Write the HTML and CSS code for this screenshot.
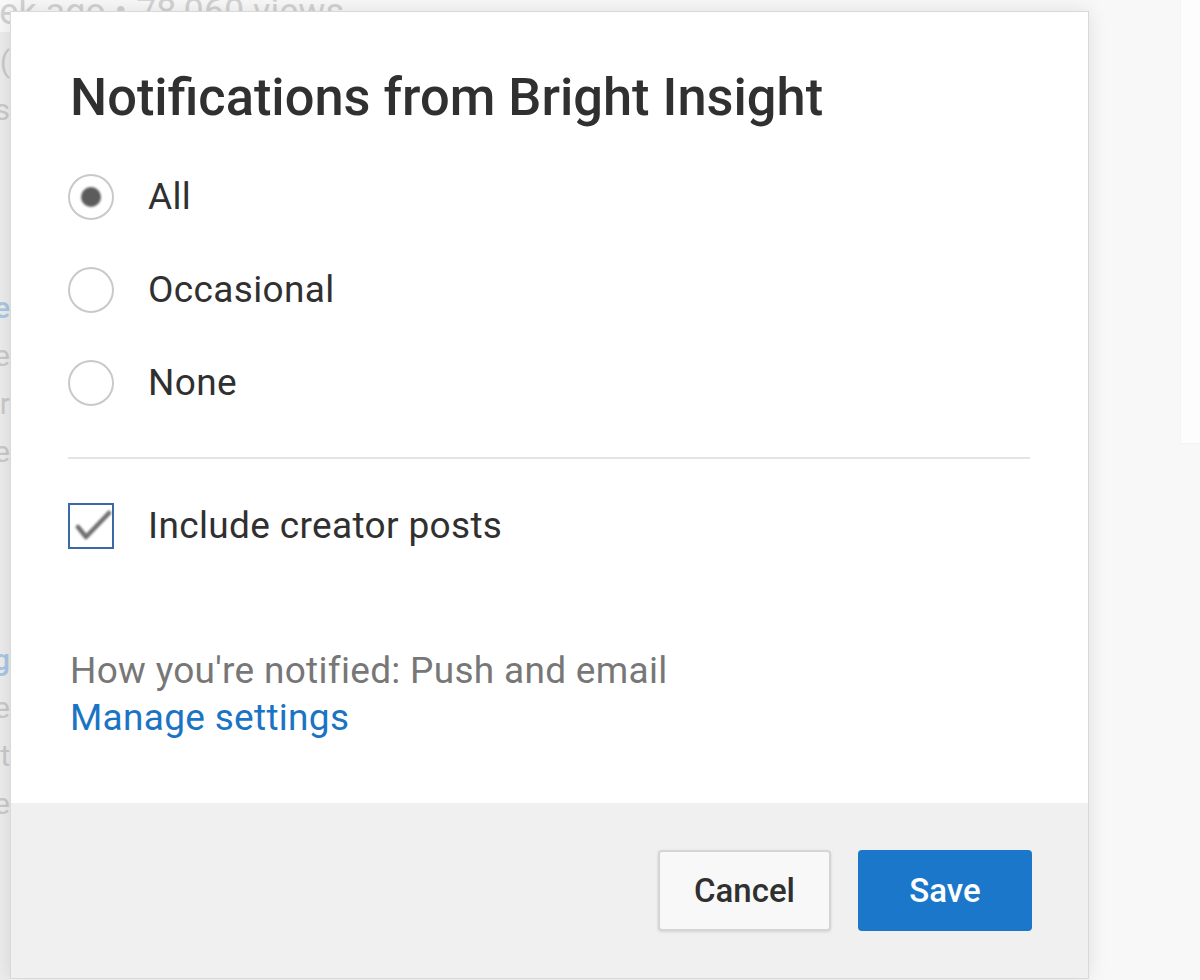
FILE: index.html
```html
<!DOCTYPE html>
<html lang="en">
<head>
<meta charset="utf-8">
<title>Notifications from Bright Insight</title>
<link rel="stylesheet" href="styles.css">
</head>
<body>
<div class="page">
  <div class="meta">1 week ago • 78,060 views</div>
  <div class="side">
    <div class="frag top">Play (</div>
    <div class="frag">views</div>
    <div class="group">
      <div class="frag link">The sure</div>
      <div class="frag">one</div>
      <div class="frag">year</div>
      <div class="frag">time</div>
    </div>
    <div class="group second">
      <div class="frag link">Amazing</div>
      <div class="frag">one</div>
      <div class="frag">last</div>
      <div class="frag">time</div>
    </div>
  </div>
  <div class="main"></div>
  <div class="panel"></div>
</div>

<div class="dialog" role="dialog" aria-labelledby="dlg-title">
  <div class="content">
    <h1 class="title" id="dlg-title">Notifications from Bright Insight</h1>
    <div class="options">
      <div class="option"><span class="radio on"></span><span class="label">All</span></div>
      <div class="option"><span class="radio"></span><span class="label">Occasional</span></div>
      <div class="option"><span class="radio"></span><span class="label">None</span></div>
    </div>
    <div class="divider"></div>
    <div class="option check-row">
      <span class="checkbox">
        <svg viewBox="0 0 46 46" width="46" height="46" aria-hidden="true"><path d="M10 24 L18 34 L41 10" fill="none" stroke="#707070" stroke-width="4.5" stroke-linecap="round" stroke-linejoin="round"/></svg>
      </span>
      <span class="label">Include creator posts</span>
    </div>
    <div class="notify">
      <div class="how">How you're notified: Push and email</div>
      <a class="manage" href="#">Manage settings</a>
    </div>
  </div>
  <div class="footer">
    <button class="btn cancel" type="button">Cancel</button>
    <button class="btn save" type="button">Save</button>
  </div>
</div>
</body>
</html>
```

FILE: styles.css
```css
html, body {
  margin: 0;
  padding: 0;
}

body {
  background: #f8f8f8;
  font-family: Roboto, "Liberation Sans", Arial, sans-serif;
  width: 1200px;
  height: 980px;
  overflow: hidden;
  position: relative;
}

/* background page (faded) */
.page {
  display: grid;
  grid-template-columns: 10px 1fr 20px;
  grid-template-rows: auto 1fr;
  height: 980px;
}

.meta {
  grid-column: 1 / 3;
  grid-row: 1;
  margin: -8px 0 0 -76px;
  font-size: 36px;
  line-height: 40px;
  color: #d2d2d2;
  white-space: nowrap;
}

.side {
  grid-column: 1;
  grid-row: 2;
  overflow: hidden;
  background: #ececec;
  display: flex;
  flex-direction: column;
  align-items: flex-end;
}

.frag {
  font-size: 30px;
  line-height: 48px;
  color: #c9c9c9;
  white-space: nowrap;
}

.frag.top {
  margin-top: 6px;
}

.frag.link {
  color: #a9c6e4;
  font-weight: 500;
}

.group {
  margin-top: 150px;
  display: flex;
  flex-direction: column;
  align-items: flex-end;
}

.group.second {
  margin-top: 160px;
}

.main {
  grid-column: 2;
  grid-row: 2;
}

.panel {
  grid-column: 3;
  grid-row: 1 / 3;
  height: 443px;
  background: #fdfdfd;
  border-left: 1px solid #f3f3f3;
  border-bottom: 1px solid #f3f3f3;
}

/* dialog */
.dialog {
  position: absolute;
  left: 10px;
  top: 11px;
  width: 1079px;
  height: 968px;
  box-sizing: border-box;
  border: 1px solid #d9d9d9;
  background: #ffffff;
  box-shadow: 0 0 18px rgba(0, 0, 0, 0.1);
  display: flex;
  flex-direction: column;
}

.content {
  flex: 1;
  padding: 55px 58px 0 59px;
}

.title {
  margin: 0 0 23px;
  font-size: 52.4px;
  line-height: 60px;
  font-weight: 500;
  color: #303030;
}

.option {
  height: 93px;
  display: flex;
  align-items: center;
  gap: 34px;
  margin-left: -2px;
}

.label {
  font-size: 37px;
  line-height: 48px;
  color: #303030;
  letter-spacing: 0.35px;
}

.radio {
  width: 46px;
  height: 46px;
  box-sizing: border-box;
  border: 2px solid #c9c9c9;
  border-radius: 50%;
  display: flex;
  align-items: center;
  justify-content: center;
  flex: none;
}

.radio.on::after {
  content: "";
  width: 20px;
  height: 20px;
  border-radius: 50%;
  background: #5c5c5c;
  filter: blur(1px);
}

.divider {
  height: 2px;
  background: #e4e4e4;
  margin: 28px 0 20px -2px;
}

.checkbox {
  width: 46px;
  height: 46px;
  box-sizing: border-box;
  border: 2px solid #3b69a6;
  flex: none;
  position: relative;
}

.checkbox svg {
  position: absolute;
  left: -2px;
  top: -2px;
  filter: blur(0.8px);
}

.notify {
  margin-top: 75px;
  font-size: 37px;
  line-height: 47px;
  letter-spacing: 0.3px;
}

.how {
  color: #777777;
}

.manage {
  color: #1b74c3;
  text-decoration: none;
}

.footer {
  height: 175px;
  flex: none;
  box-sizing: border-box;
  background: #f0f0f0;
  padding: 47px 56px 0 0;
  display: flex;
  justify-content: flex-end;
  align-items: flex-start;
  gap: 27px;
}

.btn {
  height: 81px;
  border-radius: 4px;
  font-family: Roboto, "Liberation Sans", Arial, sans-serif;
  font-size: 33px;
  font-weight: 500;
  cursor: pointer;
  padding: 0;
}

.cancel {
  width: 173px;
  background: #f8f8f8;
  border: 2px solid #d5d5d5;
  color: #303030;
  box-shadow: 0 1px 3px rgba(0, 0, 0, 0.12);
}

.save {
  width: 174px;
  background: #1a77c9;
  border: none;
  color: #ffffff;
}
```
